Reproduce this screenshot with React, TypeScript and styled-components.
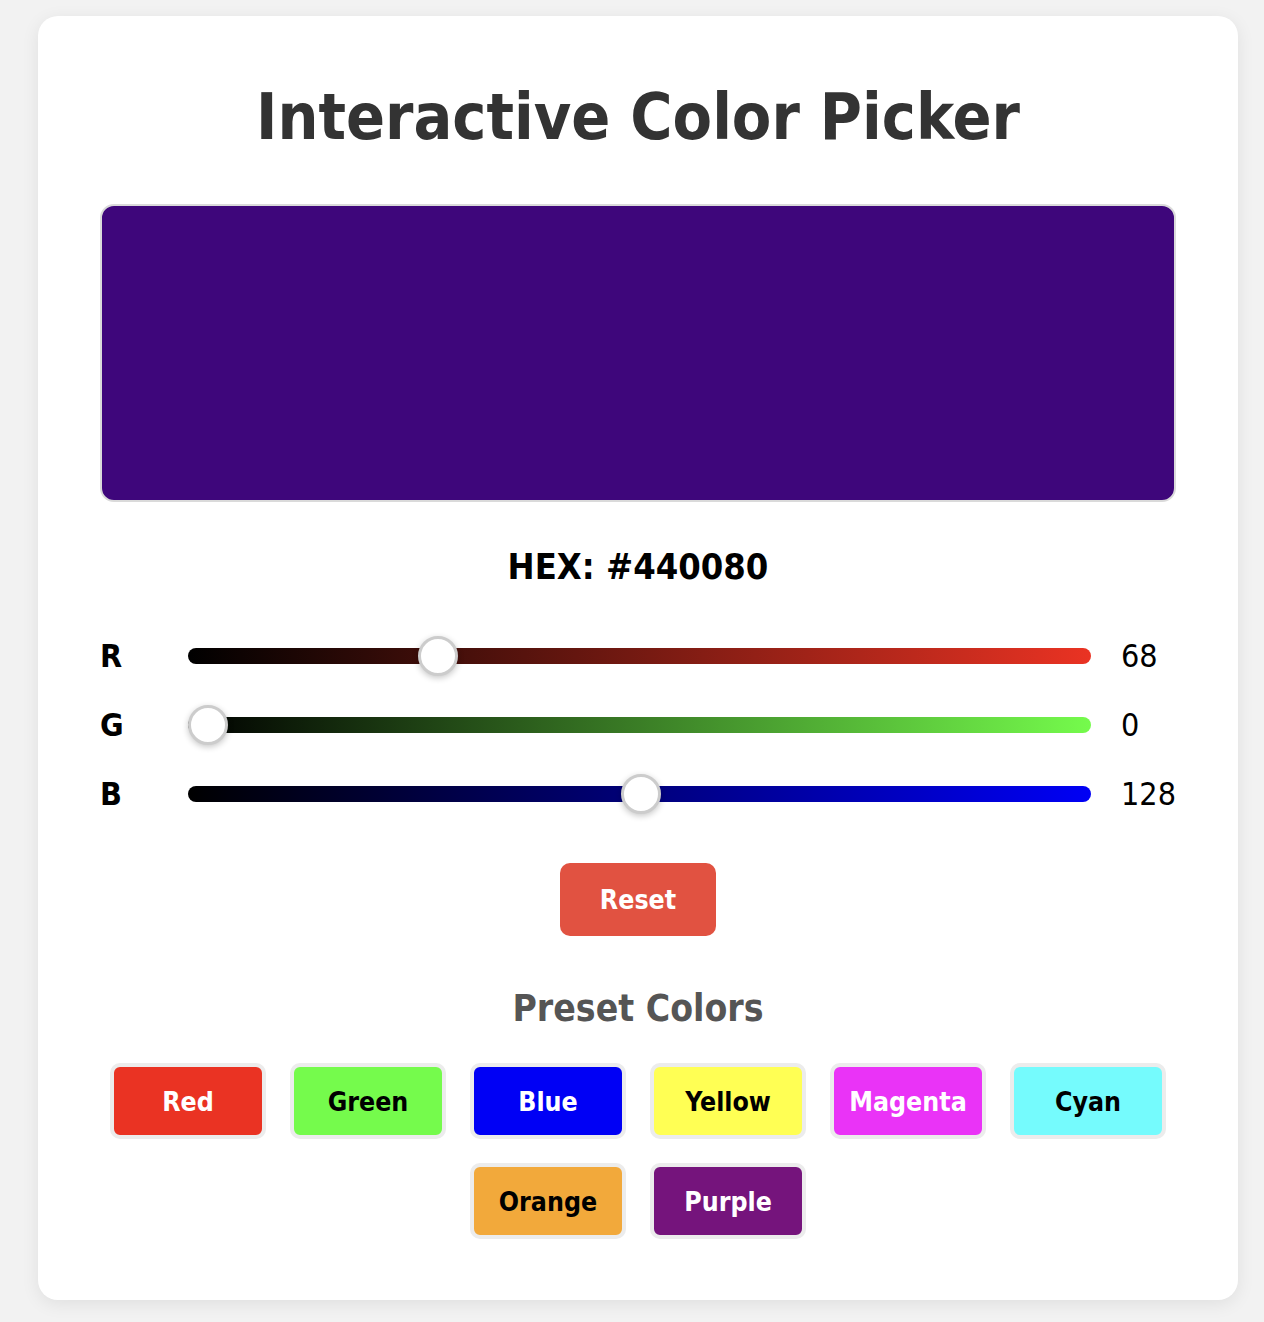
import React, { useState } from "react";
import styled, { createGlobalStyle } from "styled-components";

const GlobalStyle = createGlobalStyle`
  html, body {
    margin: 0;
    padding: 0;
    background: #f2f2f2;
  }
  body {
    font-family: "DejaVu Sans Condensed", "DejaVu Sans", Verdana, sans-serif;
    font-stretch: condensed;
  }
  * { box-sizing: border-box; }
`;

// Approximate how sRGB colours look in the reference capture (display-P3 values)
const lin = (c: number) => {
  const v = c / 255;
  return v <= 0.04045 ? v / 12.92 : Math.pow((v + 0.055) / 1.055, 2.4);
};
const enc = (v: number) => {
  const x = Math.max(0, Math.min(1, v));
  const s = x <= 0.0031308 ? x * 12.92 : 1.055 * Math.pow(x, 1 / 2.4) - 0.055;
  return Math.round(s * 255);
};
const toDisplay = (r: number, g: number, b: number) => {
  const R = lin(r), G = lin(g), B = lin(b);
  const pr = 0.8225 * R + 0.1774 * G;
  const pg = 0.0332 * R + 0.9669 * G;
  const pb = 0.0171 * R + 0.0724 * G + 0.9108 * B;
  return `rgb(${enc(pr)}, ${enc(pg)}, ${enc(pb)})`;
};
const hexToRgb = (hex: string): [number, number, number] => {
  const h = hex.replace("#", "");
  return [parseInt(h.slice(0, 2), 16), parseInt(h.slice(2, 4), 16), parseInt(h.slice(4, 6), 16)];
};
const displayHex = (hex: string) => toDisplay(...hexToRgb(hex));
const toHex = (r: number, g: number, b: number) =>
  "#" + [r, g, b].map((v) => v.toString(16).padStart(2, "0")).join("").toUpperCase();

const Page = styled.div`
  padding: 16px 0 22px 38px;
`;

const Card = styled.div`
  width: 1200px;
  background: #ffffff;
  border-radius: 20px;
  box-shadow: 0 4px 18px rgba(0, 0, 0, 0.08);
  padding: 63px 62px 61px;
  display: flex;
  flex-direction: column;
`;

const Title = styled.h1`
  margin: 0;
  font-size: 64px;
  line-height: 76px;
  font-weight: 700;
  color: #333333;
  text-align: center;
`;

const Preview = styled.div`
  margin-top: 49px;
  height: 298px;
  border: 2px solid #dadada;
  border-radius: 14px;
`;

const HexText = styled.div`
  margin-top: 43px;
  font-size: 36px;
  line-height: 44px;
  font-weight: 700;
  color: #000000;
  text-align: center;
`;

const Sliders = styled.div`
  margin-top: 45px;
  display: flex;
  flex-direction: column;
  gap: 25px;
`;

const SliderRow = styled.div`
  display: flex;
  align-items: center;
  height: 44px;
`;

const ChannelLabel = styled.label`
  width: 60px;
  margin-right: 28px;
  font-size: 32px;
  line-height: 44px;
  font-weight: 700;
  color: #000000;
`;

const Range = styled.input<{ $end: string }>`
  -webkit-appearance: none;
  appearance: none;
  flex: 1;
  min-width: 0;
  margin: 0;
  height: 16px;
  border-radius: 8px;
  outline: none;
  background: linear-gradient(to right, #000000, ${(p) => p.$end});
  cursor: pointer;

  &::-webkit-slider-thumb {
    -webkit-appearance: none;
    appearance: none;
    width: 40px;
    height: 40px;
    border-radius: 50%;
    background: #ffffff;
    border: 3px solid #cccccc;
    box-shadow: 0 2px 6px rgba(0, 0, 0, 0.22);
  }
  &::-moz-range-thumb {
    width: 34px;
    height: 34px;
    border-radius: 50%;
    background: #ffffff;
    border: 3px solid #cccccc;
    box-shadow: 0 2px 6px rgba(0, 0, 0, 0.22);
  }
`;

const ChannelValue = styled.span`
  width: 55px;
  margin-left: 30px;
  font-size: 32px;
  line-height: 44px;
  font-weight: 400;
  color: #000000;
`;

const ResetButton = styled.button<{ $bg: string }>`
  align-self: center;
  margin-top: 47px;
  width: 156px;
  height: 73px;
  border: none;
  border-radius: 10px;
  background: ${(p) => p.$bg};
  color: #ffffff;
  font-family: inherit;
  font-stretch: condensed;
  font-size: 26.5px;
  font-weight: 700;
  cursor: pointer;
`;

const PresetTitle = styled.h3`
  margin: 51px 0 0;
  font-size: 37px;
  line-height: 44px;
  font-weight: 700;
  color: #555555;
  text-align: center;
`;

const PresetGrid = styled.div`
  margin-top: 32px;
  display: flex;
  flex-wrap: wrap;
  justify-content: center;
  gap: 24px;
`;

const PresetButton = styled.button<{ $bg: string; $fg: string }>`
  width: 156px;
  height: 76px;
  border: 4px solid #ececec;
  border-radius: 10px;
  background: ${(p) => p.$bg};
  color: ${(p) => p.$fg};
  font-family: inherit;
  font-stretch: condensed;
  font-size: 26.5px;
  font-weight: 700;
  cursor: pointer;
`;

const presets = [
  { name: "Red", hex: "#ff0000", fg: "#ffffff" },
  { name: "Green", hex: "#00ff00", fg: "#000000" },
  { name: "Blue", hex: "#0000ff", fg: "#ffffff" },
  { name: "Yellow", hex: "#ffff00", fg: "#000000" },
  { name: "Magenta", hex: "#ff00ff", fg: "#ffffff" },
  { name: "Cyan", hex: "#00ffff", fg: "#000000" },
  { name: "Orange", hex: "#ffa500", fg: "#000000" },
  { name: "Purple", hex: "#800080", fg: "#ffffff" },
];

type Channel = "r" | "g" | "b";

const channels: { key: Channel; label: string; end: string }[] = [
  { key: "r", label: "R", end: toDisplay(255, 0, 0) },
  { key: "g", label: "G", end: toDisplay(0, 255, 0) },
  { key: "b", label: "B", end: toDisplay(0, 0, 255) },
];

const initial = { r: 68, g: 0, b: 128 };

export default function App() {
  const [rgb, setRgb] = useState(initial);

  const setChannel = (key: Channel, v: number) => setRgb((prev) => ({ ...prev, [key]: v }));

  return (
    <Page>
      <GlobalStyle />
      <Card>
        <Title>Interactive Color Picker</Title>
        <Preview style={{ background: toDisplay(rgb.r, rgb.g, rgb.b) }} />
        <HexText>HEX: {toHex(rgb.r, rgb.g, rgb.b)}</HexText>
        <Sliders>
          {channels.map((c) => (
            <SliderRow key={c.key}>
              <ChannelLabel htmlFor={`ch-${c.key}`}>{c.label}</ChannelLabel>
              <Range
                id={`ch-${c.key}`}
                type="range"
                min={0}
                max={255}
                value={rgb[c.key]}
                $end={c.end}
                onChange={(e) => setChannel(c.key, Number(e.target.value))}
              />
              <ChannelValue>{rgb[c.key]}</ChannelValue>
            </SliderRow>
          ))}
        </Sliders>
        <ResetButton $bg={displayHex("#f44336")} onClick={() => setRgb(initial)}>
          Reset
        </ResetButton>
        <PresetTitle>Preset Colors</PresetTitle>
        <PresetGrid>
          {presets.map((p) => (
            <PresetButton
              key={p.name}
              $bg={displayHex(p.hex)}
              $fg={p.fg}
              onClick={() => {
                const [r, g, b] = hexToRgb(p.hex);
                setRgb({ r, g, b });
              }}
            >
              {p.name}
            </PresetButton>
          ))}
        </PresetGrid>
      </Card>
    </Page>
  );
}
